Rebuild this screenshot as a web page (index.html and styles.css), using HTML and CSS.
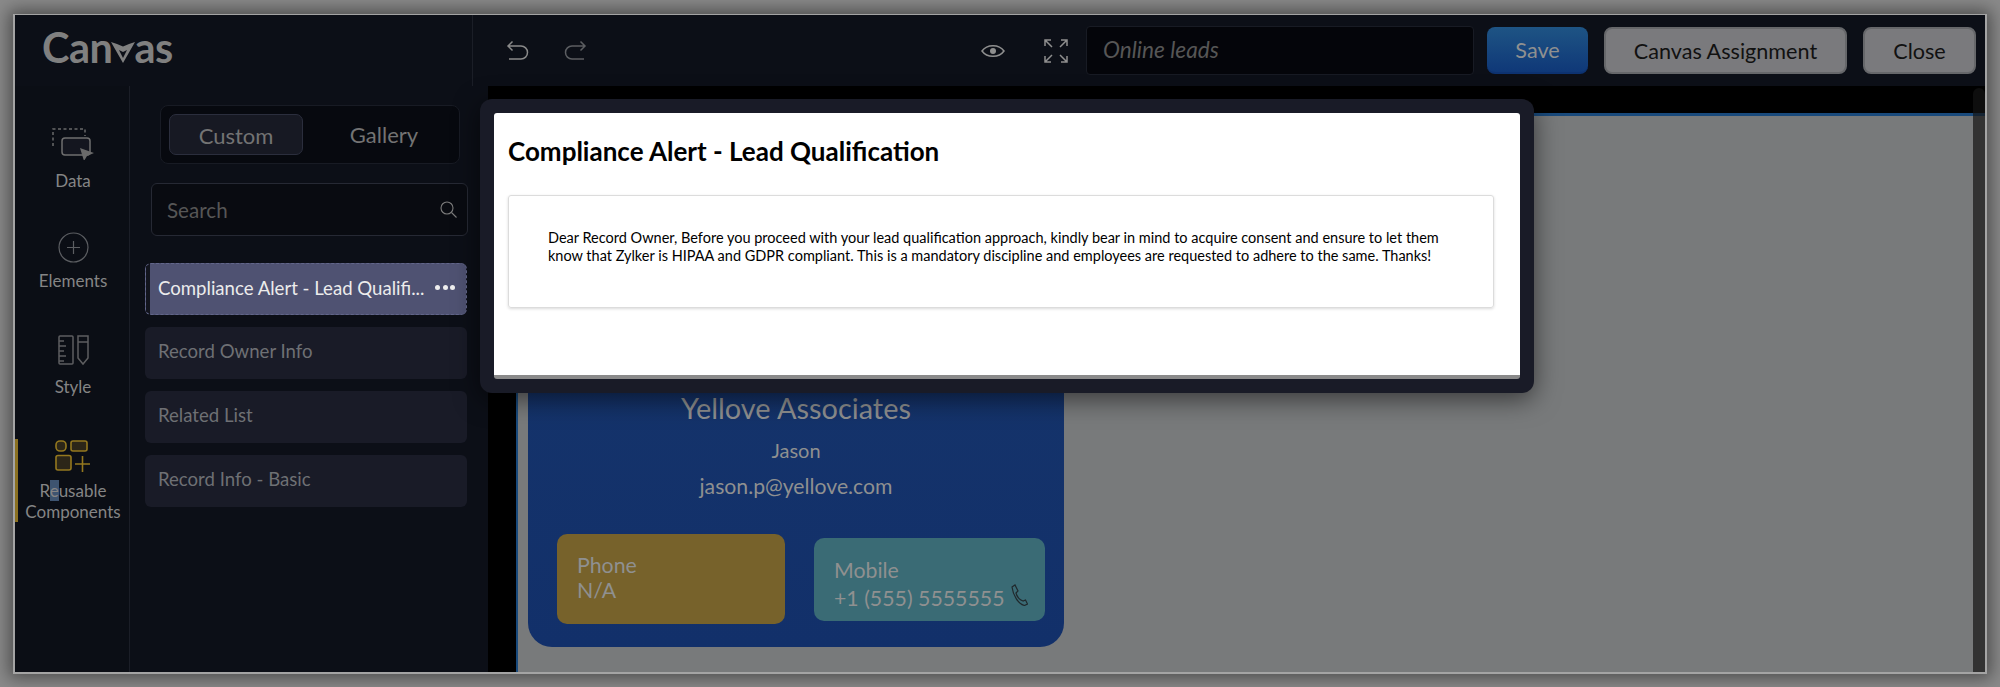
FILE: index.html

```html
<!DOCTYPE html>
<html lang="en">
<head>
  <meta charset="UTF-8">
  <title>Canvas</title>
  <link rel="stylesheet" href="styles.css">
</head>
<body>
  <div class="window">
    <header class="topbar">
      <div class="logo">Can<svg class="logo-v" viewBox="0 0 24 22"><path d="M0 1l6 2 6 2.500 6-2.500 6-2-12 21z" fill="#808080"/><path d="M8 9l4 2 4-2-4 8z" fill="#0c0f17"/></svg>as</div>
      <div class="history">
        <svg class="icon-undo" viewBox="0 0 24 20"><path d="M2 6H15a6.500 6.500 0 0 1 0 13H3M6.500 1.500L2 6l4.500 4.500" fill="none" stroke="#8a8a8a" stroke-width="1.500"/></svg>
        <svg class="icon-undo dim" viewBox="0 0 24 20"><path d="M22 6H9a6.500 6.500 0 0 0 0 13H21M17.500 1.500L22 6l-4.500 4.500" fill="none" stroke="#5c5e62" stroke-width="1.500"/></svg>
      </div>
      <div class="actions">
        <svg class="icon-eye" viewBox="0 0 24 16"><path d="M1 8C6 1 18 1 23 8C18 15 6 15 1 8z" fill="none" stroke="#8f8f8f" stroke-width="1.500"/><circle cx="12" cy="8" r="3" fill="#8f8f8f"/></svg>
        <svg class="icon-full" viewBox="0 0 24 24" fill="none" stroke="#8f8f8f" stroke-width="1.500"><path d="M1 7V1H7M1 1L8 8M17 1H23V7M23 1L16 8M1 17V23H7M1 23L8 16M23 17V23H17M23 23L16 16"/></svg>
        <div class="name-box">Online leads</div>
        <button class="btn btn-save">Save</button>
        <button class="btn btn-assign">Canvas Assignment</button>
        <button class="btn btn-close">Close</button>
      </div>
    </header>

    <div class="main">
      <nav class="rail">
        <div class="rail-item item-data">
          <svg class="rail-icon" width="42" height="32" viewBox="0 0 42 32" fill="none">
            <path d="M1 18V1H33V8" stroke="#6a6a6a" stroke-width="1.500" stroke-dasharray="3 2.500"/>
            <rect x="10" y="10" width="28" height="17" rx="3" fill="#14161f" stroke="#6f6f6f" stroke-width="1.500"/>
            <path d="M28 20l14 5-7 3-3 5z" fill="#6a6a6a"/>
          </svg>
          <span>Data</span>
        </div>
        <div class="rail-item item-elements">
          <svg class="rail-icon" width="31" height="31" viewBox="0 0 31 31" fill="none" stroke="#5c5e62" stroke-width="1.200">
            <circle cx="15.500" cy="15.500" r="14.500"/>
            <path d="M15.500 9V22M9 15.500H22"/>
          </svg>
          <span>Elements</span>
        </div>
        <div class="rail-item item-style">
          <svg class="rail-icon" width="31" height="31" viewBox="0 0 31 31" fill="none" stroke="#5e5e60" stroke-width="1.500">
            <rect x="1" y="1" width="14" height="28" rx="1"/>
            <path d="M1 6H6M1 11H8M1 16H6M1 21H8M1 26H6"/>
            <path d="M20 1H30V23L25 29 20 23zM20 7H30"/>
          </svg>
          <span>Style</span>
        </div>
        <div class="rail-item item-reuse">
          <svg class="rail-icon" width="36" height="33" viewBox="0 0 36 33" stroke="#94781f" stroke-width="1.600" fill="#2c2618">
            <rect x="1" y="1" width="10" height="10" rx="4"/>
            <rect x="16" y="1" width="16" height="10" rx="2"/>
            <rect x="1" y="15.500" width="15" height="14.500" rx="2"/>
            <path d="M20 24H35M27.500 16V32" fill="none"/>
          </svg>
          <span>R<mark class="sel">e</mark>usable<br>Components</span>
        </div>
      </nav>

      <aside class="panel">
        <div class="tabs">
          <div class="tab tab-on">Custom</div>
          <div class="tab">Gallery</div>
        </div>
        <div class="search">
          <span>Search</span>
          <svg width="17" height="17" viewBox="0 0 17 17" fill="none" stroke="#7c7c7c" stroke-width="1.100"><circle cx="7" cy="7" r="6"/><path d="M11.500 11.500L16.500 16.500"/></svg>
        </div>
        <ul class="list">
          <li class="list-item list-on">
            <span>Compliance Alert - Lead Qualifi...</span>
            <i class="dots"><b></b><b></b><b></b></i>
          </li>
          <li class="list-item">Record Owner Info</li>
          <li class="list-item">Related List</li>
          <li class="list-item">Record Info - Basic</li>
        </ul>
      </aside>

      <section class="stage">
        <div class="stage-top"></div>
        <div class="stage-body">
          <div class="sheet">
            <div class="card">
              <div class="card-name">Yellove Associates</div>
              <div class="card-line">Jason</div>
              <div class="card-line card-mail">jason.p@yellove.com</div>
              <div class="tiles">
                <div class="tile tile-phone">Phone<br>N/A</div>
                <div class="tile tile-mobile">
                  Mobile<br>+1 (555) 5555555
                  <svg class="icon-call" width="17" height="22" viewBox="0 0 17 22" fill="none" stroke="#20282c" stroke-width="1.200"><path d="M1 3L4 1 7 7 5 9C6 13 9 16 12 17L14.500 16 16.500 20 13.500 21.500C7 20 2 11 1 3z"/></svg>
                </div>
              </div>
            </div>
          </div>
        </div>
        <div class="scrollbar"></div>
      </section>
    </div>

    <div class="modal">
      <div class="modal-inner">
        <h2>Compliance Alert - Lead Qualification</h2>
        <div class="modal-card">
          <p>Dear Record Owner, Before you proceed with your lead qualification approach, kindly bear in mind to acquire consent and ensure to let them know that Zylker is HIPAA and GDPR compliant. This is a mandatory discipline and employees are requested to adhere to the same. Thanks!</p>
        </div>
      </div>
    </div>
  </div>
</body>
</html>
```

FILE: styles.css

```css
* {
  box-sizing: border-box;
}
html, body {
  height: 100%;
  margin: 0;
}
body {
  padding: 14px 13px 13px 13px;
  background-color: #8a8a8a;
  font-family: "Lato", "Liberation Sans", sans-serif;
  overflow: hidden;
}
.window {
  position: relative;
  height: 100%;
  display: flex;
  flex-direction: column;
  border: 1px solid #a4a4a4;
  border-width: 1px 2px 2px 2px;
  background-color: #0c0f17;
  box-shadow: 0 0 16px 4px rgba(0, 0, 0, 0.45);
}

/* top bar */
.topbar {
  height: 71px;
  flex: none;
  display: flex;
  align-items: center;
  background-color: #0c0f17;
}
.logo {
  width: 458px;
  height: 71px;
  padding: 8px 0 0 27px;
  border-right: 1px solid #1b1e27;
  color: #808080;
  font-size: 41.500px;
  font-weight: 700;
  line-height: 48px;
  letter-spacing: -0.5px;
}
.logo-v {
  width: 24px;
  height: 22px;
  margin: 0 -1px;
}
.history {
  display: flex;
  gap: 33px;
  padding: 0 0 2px 33px;
}
.icon-undo {
  width: 24px;
  height: 20px;
}
.actions {
  margin-left: auto;
  display: flex;
  align-items: center;
  padding-right: 9px;
}
.icon-eye {
  width: 24px;
  height: 16px;
  margin-right: 39px;
}
.icon-full {
  width: 24px;
  height: 24px;
  margin-right: 18px;
}
.name-box {
  width: 388px;
  height: 49px;
  padding: 0 16px;
  margin-right: 13px;
  border: 1px solid #181b24;
  border-radius: 4px;
  background-color: #04050a;
  color: #565656;
  font-size: 22.700px;
  font-style: italic;
  line-height: 46px;
}
.btn {
  height: 47px;
  margin-right: 16px;
  border: none;
  border-radius: 8px;
  font-family: inherit;
  font-size: 21.600px;
}
.btn-save {
  width: 101px;
  background: linear-gradient(#1e5484, #0f3878);
  border-bottom: 2px solid #0d3270;
  color: #8f9090;
}
.btn-assign {
  width: 243px;
  background-color: #7a7a7d;
  border: 2px solid #66676a;
  color: #111;
}
.btn-close {
  width: 113px;
  margin-right: 0;
  background-color: #7a7a7d;
  border: 2px solid #66676a;
  color: #111;
}

/* main area */
.main {
  flex: 1;
  display: flex;
  min-height: 0;
}
.rail {
  width: 115px;
  flex: none;
  padding-left: 2px;
  border-right: 1px solid #1b1e27;
  background-color: #0b0e15;
  color: #858585;
  font-size: 17px;
  line-height: 21px;
  text-align: center;
}
.rail-item {
  display: flex;
  flex-direction: column;
  align-items: center;
}
.rail-icon {
  display: block;
}
.item-data {
  padding-top: 42px;
}
.item-data span {
  margin-top: 10px;
}
.item-elements {
  padding-top: 41px;
}
.item-elements span {
  margin-top: 7px;
}
.item-style {
  padding-top: 44px;
}
.item-style span {
  margin-top: 10px;
}
.item-reuse {
  height: 83px;
  margin: 42px 0 0 -2px;
  padding: 1px 1px 0 0;
  border-left: 3px solid #8a7020;
}
.item-reuse span {
  margin-top: 7px;
}
.sel {
  background-color: #3e5470;
  color: inherit;
}

/* left panel */
.panel {
  width: 358px;
  flex: none;
  padding: 19px 20px 0 15px;
  background-color: #0c0f17;
}
.tabs {
  width: 300px;
  height: 59px;
  margin-left: 15px;
  padding: 8px;
  display: flex;
  border: 1px solid #181b24;
  border-radius: 8px;
  background-color: #07090f;
  color: #737373;
  font-size: 22px;
}
.tab {
  flex: 1;
  padding-left: 14px;
  line-height: 41px;
  text-align: center;
}
.tab-on {
  flex: none;
  width: 134px;
  padding-left: 0;
  border: 1px solid #2b2e3d;
  border-radius: 7px;
  background-color: #171923;
}
.search {
  width: 317px;
  height: 53px;
  margin: 19px 0 0 6px;
  padding: 0 10px 0 15px;
  display: flex;
  align-items: center;
  justify-content: space-between;
  border: 1px solid #262934;
  border-radius: 6px;
  background-color: #090b11;
  color: #565656;
  font-size: 20.600px;
}
.list {
  list-style: none;
  margin: 27px 0 0 0;
  padding: 0;
}
.list-item {
  width: 322px;
  height: 52px;
  margin-bottom: 12px;
  padding: 0 13px 4px 13px;
  display: flex;
  align-items: center;
  justify-content: space-between;
  border-radius: 6px;
  background-color: #191b27;
  color: #6e7074;
  font-size: 18.600px;
}
.list-on {
  padding: 0 11px 3px 12px;
  border: 1px dashed #62668a;
  background: linear-gradient(90deg, #12141d 4px, #4f5272 4px);
  color: #ececec;
}
.dots {
  display: flex;
  gap: 2.500px;
}
.dots b {
  width: 5px;
  height: 5px;
  border-radius: 50%;
  background-color: #eee;
}

/* canvas */
.stage {
  position: relative;
  flex: 1;
  min-width: 0;
  display: flex;
  flex-direction: column;
  background-color: #000;
}
.stage-top {
  height: 27px;
  flex: none;
}
.stage-body {
  flex: 1;
  padding-left: 28px;
  min-height: 0;
}
.sheet {
  height: 100%;
  padding-left: 10px;
  border-top: 3px solid #194a7c;
  border-left: 2px solid #194a7c;
  background-color: #787a7b;
}
.card {
  width: 536px;
  height: 531px;
  padding-top: 271px;
  border-radius: 0 0 24px 24px;
  background: linear-gradient(#17366b, #12306a);
  color: #8f9090;
  text-align: center;
}
.card-name {
  height: 45px;
  font-size: 28.900px;
  line-height: 42px;
}
.card-line {
  height: 36px;
  font-size: 20px;
  line-height: 36px;
}
.card-mail {
  font-size: 21.200px;
}
.tiles {
  display: flex;
  align-items: center;
  justify-content: space-between;
  margin-top: 30px;
  padding: 0 19px 0 29px;
  text-align: left;
  font-size: 21.300px;
}
.tile {
  position: relative;
  border-radius: 10px;
}
.tile-phone {
  width: 228px;
  height: 90px;
  padding: 19px 20px;
  line-height: 25px;
  background-color: #77622b;
}
.tile-mobile {
  width: 231px;
  height: 83px;
  padding: 18px 20px;
  line-height: 28px;
  background-color: #3a6b75;
}
.icon-call {
  position: absolute;
  right: 17px;
  top: 46px;
}
.scrollbar {
  position: absolute;
  right: 0;
  top: 2px;
  bottom: 0;
  width: 12px;
  border-radius: 6px 6px 0 0;
  background-color: rgba(20, 20, 20, 0.7);
}

/* dialog over the canvas */
.modal {
  position: absolute;
  left: 465px;
  top: 84px;
  width: 1054px;
  height: 294px;
  padding: 14px;
  border-radius: 12px;
  background-color: #191b27;
  box-shadow: 0 6px 26px rgba(0, 0, 0, 0.55);
}
.modal-inner {
  height: 266px;
  padding: 0 26px 0 14px;
  border-radius: 3px;
  border-bottom: 4px solid #8a8a8a;
  background-color: #fff;
  color: #000;
}
.modal-inner h2 {
  margin: 0;
  padding-top: 22px;
  font-size: 26px;
  line-height: 32px;
  font-weight: 700;
}
.modal-card {
  height: 113px;
  margin-top: 28px;
  padding: 33px 40px 33px 39px;
  border: 1px solid #dcdcdc;
  border-radius: 3px;
  box-shadow: 0 1px 3px rgba(0, 0, 0, 0.15);
}
.modal-card p {
  margin: 0;
  font-size: 14.500px;
  line-height: 18px;
}
```
